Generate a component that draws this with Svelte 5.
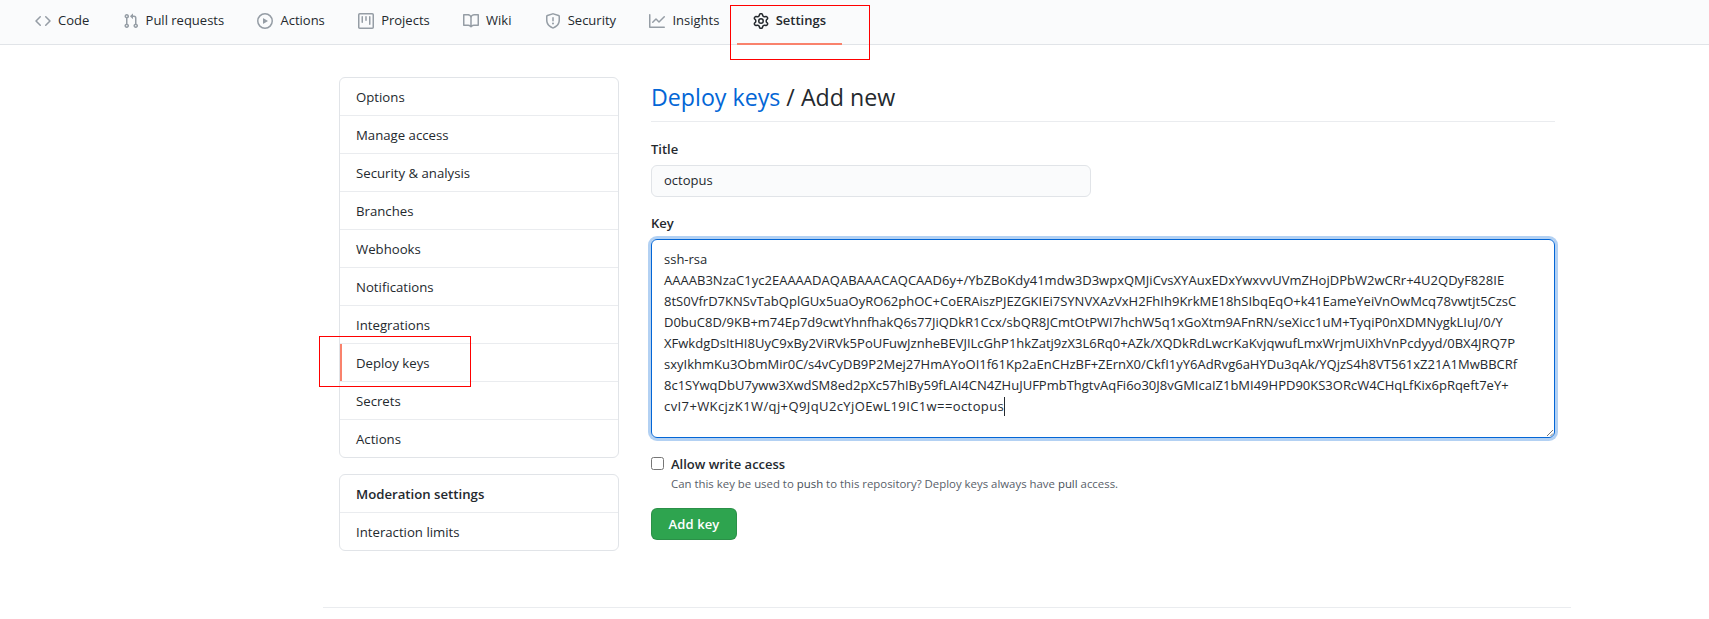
<script>
  const tabs = [
    { name: 'Code', vb: 16, d: 'M4.72 3.22a.75.75 0 011.06 1.06L2.06 8l3.72 3.72a.75.75 0 11-1.06 1.06L.47 8.53a.75.75 0 010-1.06l4.25-4.25zm6.56 0a.75.75 0 10-1.06 1.06L13.94 8l-3.72 3.72a.75.75 0 101.06 1.06l4.25-4.25a.75.75 0 000-1.06l-4.25-4.25z' },
    { name: 'Pull requests', d: 'M7.177 3.073L9.573.677A.25.25 0 0110 .854v4.792a.25.25 0 01-.427.177L7.177 3.427a.25.25 0 010-.354zM3.75 2.5a.75.75 0 100 1.5.75.75 0 000-1.5zm-2.25.75a2.25 2.25 0 113 2.122v5.256a2.251 2.251 0 11-1.5 0V5.372A2.25 2.25 0 011.5 3.25zM11 2.5h-1V4h1a1 1 0 011 1v5.628a2.251 2.251 0 101.5 0V5A2.5 2.5 0 0011 2.5zm1 10.25a.75.75 0 111.5 0 .75.75 0 01-1.5 0zM3.75 12a.75.75 0 100 1.5.75.75 0 000-1.5z' },
    { name: 'Actions', d: 'M1.5 8a6.5 6.5 0 1113 0 6.5 6.5 0 01-13 0zM8 0a8 8 0 100 16A8 8 0 008 0zM6.379 5.227A.25.25 0 006 5.442v5.117a.25.25 0 00.379.214l4.264-2.559a.25.25 0 000-.428L6.379 5.227z' },
    { name: 'Projects', d: 'M1.75 0A1.75 1.75 0 000 1.75v12.5C0 15.216.784 16 1.75 16h12.5A1.75 1.75 0 0016 14.25V1.75A1.75 1.75 0 0014.25 0H1.75zM1.5 1.75a.25.25 0 01.25-.25h12.5a.25.25 0 01.25.25v12.5a.25.25 0 01-.25.25H1.75a.25.25 0 01-.25-.25V1.75zM11.75 3a.75.75 0 00-.75.75v7.5a.75.75 0 001.5 0v-7.5a.75.75 0 00-.75-.75zm-8.25.75a.75.75 0 011.5 0v5.5a.75.75 0 01-1.5 0v-5.5zM8 3a.75.75 0 00-.75.75v3.5a.75.75 0 001.5 0v-3.5A.75.75 0 008 3z' },
    { name: 'Wiki', d: 'M0 1.75A.75.75 0 01.75 1h4.253c1.227 0 2.317.59 3 1.501A3.744 3.744 0 0111.006 1h4.245a.75.75 0 01.75.75v10.5a.75.75 0 01-.75.75h-4.507a2.25 2.25 0 00-1.591.659l-.622.621a.75.75 0 01-1.06 0l-.622-.621A2.25 2.25 0 005.258 13H.75a.75.75 0 01-.75-.75V1.75zm8.755 3a2.25 2.25 0 012.25-2.25H14.5v9h-3.757c-.71 0-1.4.201-1.992.572l.004-7.322zm-1.504 7.324l.004-5.073-.002-2.253A2.25 2.25 0 005.003 2.5H1.5v9h3.757a3.75 3.75 0 011.994.574z' },
    { name: 'Security', d: 'M7.467.133a1.75 1.75 0 011.066 0l5.25 1.68A1.75 1.75 0 0115 3.48V7c0 1.566-.32 3.182-1.303 4.682-.983 1.498-2.585 2.813-5.032 3.855a1.7 1.7 0 01-1.33 0c-2.447-1.042-4.049-2.357-5.032-3.855C1.32 10.182 1 8.566 1 7V3.48a1.75 1.75 0 011.217-1.667l5.25-1.68zm.61 1.429a.25.25 0 00-.153 0l-5.25 1.68a.25.25 0 00-.174.238V7c0 1.358.275 2.666 1.057 3.86.784 1.194 2.121 2.34 4.366 3.297a.2.2 0 00.154 0c2.245-.956 3.582-2.104 4.366-3.298C13.225 9.666 13.5 8.36 13.5 7V3.48a.25.25 0 00-.174-.237l-5.25-1.68zM9 10.5a1 1 0 11-2 0 1 1 0 012 0zm-.25-5.75a.75.75 0 10-1.5 0v3a.75.75 0 001.5 0v-3z' },
    { name: 'Insights', d: 'M1.5 1.75a.75.75 0 00-1.5 0v12.5c0 .414.336.75.75.75h14.5a.75.75 0 000-1.5H1.5V1.75zm14.28 2.53a.75.75 0 00-1.06-1.06L10 7.94 7.53 5.47a.75.75 0 00-1.06 0L3.22 8.72a.75.75 0 001.06 1.06L7 7.06l2.47 2.47a.75.75 0 001.06 0l5.25-5.25z' },
    { name: 'Settings', selected: true, d: 'M7.429 1.525a6.593 6.593 0 011.142 0c.036.003.108.036.137.146l.289 1.105c.147.56.55.967.997 1.189.174.086.341.183.501.29.417.278.97.423 1.53.27l1.102-.303c.11-.03.175.016.195.046.219.31.41.641.573.989.014.031.022.11-.059.19l-.815.806c-.411.406-.562.957-.53 1.456a4.588 4.588 0 010 .582c-.032.499.119 1.05.53 1.456l.815.806c.08.08.073.159.059.19a6.494 6.494 0 01-.573.99c-.02.029-.086.074-.195.045l-1.103-.303c-.559-.153-1.112-.008-1.529.27-.16.107-.327.204-.5.29-.449.222-.851.628-.998 1.189l-.289 1.105c-.029.11-.101.143-.137.146a6.613 6.613 0 01-1.142 0c-.036-.003-.108-.037-.137-.146l-.289-1.105c-.147-.56-.55-.967-.997-1.189a4.502 4.502 0 01-.501-.29c-.417-.278-.97-.423-1.53-.27l-1.102.303c-.11.03-.175-.016-.195-.046a6.492 6.492 0 01-.573-.989c-.014-.031-.022-.11.059-.19l.815-.806c.411-.406.562-.957.53-1.456a4.587 4.587 0 010-.582c.032-.499-.119-1.05-.53-1.456l-.815-.806c-.08-.08-.073-.159-.059-.19a6.44 6.44 0 01.573-.99c.02-.029.086-.075.195-.045l1.103.303c.559.153 1.112.008 1.529-.27.16-.107.327-.204.5-.29.449-.222.851-.628.998-1.189l.289-1.105c.029-.11.101-.143.137-.146zM8 0c-.236 0-.47.01-.701.03-.743.065-1.29.615-1.458 1.261l-.29 1.106c-.017.066-.078.158-.211.224a5.994 5.994 0 00-.668.386c-.123.082-.233.09-.3.071L3.27 2.776c-.644-.177-1.392.02-1.82.63a7.977 7.977 0 00-.704 1.217c-.315.675-.111 1.422.363 1.891l.815.806c.05.048.098.147.088.294a6.084 6.084 0 000 .772c.01.147-.038.246-.088.294l-.815.806c-.474.469-.678 1.216-.363 1.891.2.428.436.835.704 1.218.428.609 1.176.806 1.82.63l1.103-.303c.066-.019.176-.011.299.071.213.143.436.272.668.386.133.066.194.158.212.224l.289 1.106c.169.646.715 1.196 1.458 1.26a8.094 8.094 0 001.402 0c.743-.064 1.29-.614 1.458-1.26l.29-1.106c.017-.066.078-.158.211-.224a5.98 5.98 0 00.668-.386c.123-.082.233-.09.3-.071l1.102.302c.644.177 1.392-.02 1.82-.63.268-.382.505-.789.704-1.217.315-.675.111-1.422-.364-1.891l-.814-.806c-.05-.048-.098-.147-.088-.294a6.1 6.1 0 000-.772c-.01-.147.039-.246.088-.294l.814-.806c.475-.469.679-1.216.364-1.891a7.992 7.992 0 00-.704-1.218c-.428-.609-1.176-.806-1.82-.63l-1.103.303c-.066.019-.176.011-.299-.071a5.991 5.991 0 00-.668-.386c-.133-.066-.194-.158-.212-.224L10.16 1.29C9.99.645 9.444.095 8.701.031A8.094 8.094 0 008 0zm1.5 8a1.5 1.5 0 11-3 0 1.5 1.5 0 013 0zM11 8a3 3 0 11-6 0 3 3 0 016 0z' }
  ];

  const menu = ['Options', 'Manage access', 'Security & analysis', 'Branches', 'Webhooks', 'Notifications', 'Integrations', 'Deploy keys', 'Secrets', 'Actions'];

  const keyLines = [
    { text: 'ssh-rsa', spacing: 0 },
    { text: 'AAAAB3NzaC1yc2EAAAADAQABAAACAQCAAD6y+/YbZBoKdy41mdw3D3wpxQMJiCvsXYAuxEDxYwxvvUVmZHojDPbW2wCRr+4U2QDyF828IE', spacing: 0.02 },
    { text: '8tS0VfrD7KNSvTabQplGUx5uaOyRO62phOC+CoERAiszPJEZGKIEi7SYNVXAzVxH2FhIh9KrkME18hSIbqEqO+k41EameYeiVnOwMcq78vwtjt5CzsC', spacing: 0.01 },
    { text: 'D0buC8D/9KB+m74Ep7d9cwtYhnfhakQ6s77JiQDkR1Ccx/sbQR8JCmtOtPWI7hchW5q1xGoXtm9AFnRN/seXicc1uM+TyqiP0nXDMNygkLIuJ/0/Y', spacing: 0 },
    { text: 'XFwkdgDsItHI8UyC9xBy2ViRVk5PoUFuwJznheBEVJILcGhP1hkZatj9zX3L6Rq0+AZk/XQDkRdLwcrKaKvjqwufLmxWrjmUiXhVnPcdyyd/0BX4JRQ7P', spacing: 0.02 },
    { text: 'sxyIkhmKu3ObmMir0C/s4vCyDB9P2Mej27HmAYoOI1f61Kp2aEnCHzBF+ZErnX0/CkfI1yY6AdRvg6aHYDu3qAk/YQjzS4h8VT561xZ21A1MwBBCRf', spacing: 0 },
    { text: '8c1SYwqDbU7yww3XwdSM8ed2pXc57hIBy59fLAI4CN4ZHuJUFPmbThgtvAqFi6o30J8vGMIcaIZ1bMI49HPD90KS3ORcW4CHqLfKix6pRqeft7eY+', spacing: 0 }
  ];
</script>

<div class="page">
  <nav class="tabnav">
    {#each tabs as tab}
      <a class="tab" class:selected={tab.selected} href="#top">
        <svg viewBox="0 0 16 16" width="16" height="16"><path fill-rule="evenodd" d={tab.d}></path></svg>
        <span>{tab.name}</span>
      </a>
    {/each}
  </nav>

  <div class="container">
    <aside class="sidebar">
      <div class="menu">
        {#each menu as item}
          <a class="menu-item" class:current={item === 'Deploy keys'} href="#top">{item}</a>
        {/each}
      </div>
      <div class="menu">
        <div class="menu-item heading">Moderation settings</div>
        <a class="menu-item" href="#top">Interaction limits</a>
      </div>
    </aside>

    <main>
      <h2 class="subhead"><a href="#top">Deploy keys</a> / Add new</h2>

      <label class="field-label" for="title">Title</label>
      <input id="title" class="title-input" value="octopus" />

      <div class="field-label key-label">Key</div>
      <div class="key-box">
        {#each keyLines as line}
          <div style="letter-spacing: {line.spacing}px">{line.text}</div>
        {/each}
        <div class="last-line">cvI7+WKcjzK1W/qj+Q9JqU2cYjOEwL19IC1w==octopus<span class="caret"></span></div>
        <svg class="grip" viewBox="0 0 10 10" width="10" height="10">
          <path d="M9 3L3 9M9 6.5L6.5 9" stroke="#777" stroke-width="1" fill="none"></path>
        </svg>
      </div>

      <div class="check-row">
        <input id="write" type="checkbox" />
        <div>
          <label for="write">Allow write access</label>
          <p>Can this key be used to <strong>push</strong> to this repository? Deploy keys always have <strong>pull</strong> access.</p>
        </div>
      </div>

      <button class="add-btn">Add key</button>
    </main>
  </div>

  <div class="footer-rule"></div>

  <!-- screenshot annotations -->
  <div class="mark mark-tab"></div>
  <div class="mark mark-item"></div>
</div>

<style>
  :global(body) {
    margin: 0;
    background: #fff;
  }

  .page {
    position: relative;
    height: 619px;
    overflow: hidden;
    font-family: "Open Sans", "Noto Sans", sans-serif;
    font-size: 13px;
    line-height: 21px;
    color: #24292e;
  }

  a {
    color: inherit;
    text-decoration: none;
  }

  .tabnav {
    display: flex;
    height: 44px;
    padding-left: 19px;
    background: #fafbfc;
    border-bottom: 1px solid #e1e4e8;
  }

  .tab {
    display: flex;
    align-items: center;
    gap: 7px;
    box-sizing: border-box;
    height: 45px;
    padding: 0 16px 2px;
    margin-right: 1.3px;
    border-bottom: 2px solid transparent;
  }

  .tab svg {
    fill: #959da5;
    flex: none;
  }

  .tab.selected {
    font-weight: 600;
    border-bottom-color: #f9826c;
  }

  .tab.selected svg {
    fill: #24292e;
  }

  .container {
    display: flex;
    gap: 32px;
    margin: 32px 0 0 339px;
    width: 1216px;
  }

  .sidebar {
    width: 280px;
    flex: none;
    display: flex;
    flex-direction: column;
    gap: 16px;
  }

  .menu {
    border: 1px solid #e1e4e8;
    border-radius: 6px;
    overflow: hidden;
  }

  .menu-item {
    display: block;
    height: 36px;
    padding: 1px 0 0 16px;
    font-size: 13.2px;
    line-height: 37px;
    border-top: 1px solid #eaecef;
  }

  .menu-item:first-child {
    border-top: 0;
  }

  .menu-item.heading {
    font-weight: 600;
  }

  .menu-item.current {
    box-shadow: inset 2px 0 0 #f9826c;
  }

  main {
    flex: 1;
    min-width: 0;
  }

  .subhead {
    margin: 0 0 17px;
    height: 44px;
    line-height: 40px;
    font-size: 23.2px;
    font-weight: 400;
    border-bottom: 1px solid #eaecef;
  }

  .subhead a {
    color: #0366d6;
  }

  .field-label {
    display: block;
    font-weight: 600;
    margin-bottom: 5px;
  }

  .title-input {
    display: block;
    box-sizing: border-box;
    width: 440px;
    height: 32px;
    padding: 0 12px 2px;
    margin-bottom: 16px;
    font: inherit;
    color: inherit;
    background: #fafbfc;
    border: 1px solid #e1e4e8;
    border-radius: 6px;
  }

  .key-box {
    position: relative;
    box-sizing: border-box;
    height: 199px;
    padding: 9px 12px;
    white-space: nowrap;
    overflow: hidden;
    border: 1px solid #0366d6;
    border-radius: 6px;
    box-shadow: 0 0 0 3px rgba(3, 102, 214, 0.3);
  }

  .last-line {
    letter-spacing: 0.4px;
  }

  .caret {
    display: inline-block;
    width: 1px;
    height: 19px;
    vertical-align: -5px;
    background: #24292e;
  }

  .grip {
    position: absolute;
    right: 0;
    bottom: 0;
  }

  .check-row {
    display: flex;
    gap: 7px;
    margin-top: 16px;
  }

  .check-row input {
    width: 13px;
    height: 13px;
    margin: 3px 0 0;
  }

  .check-row label {
    display: block;
    font-weight: 600;
    height: 21px;
  }

  .check-row p {
    margin: 0;
    font-size: 11.4px;
    line-height: 18px;
    color: #586069;
  }

  .check-row strong {
    font-weight: 400;
    color: #444d56;
  }

  .add-btn {
    display: block;
    margin-top: 15px;
    width: 86px;
    height: 32px;
    padding: 0;
    font: inherit;
    font-weight: 600;
    letter-spacing: 0.1px;
    color: #fff;
    background: #2ea44f;
    border: 1px solid rgba(27, 31, 35, 0.15);
    border-radius: 6px;
  }

  .footer-rule {
    width: 1248px;
    margin: 56px 0 0 323px;
    border-top: 1px solid #eaecef;
  }

  .mark {
    position: absolute;
    box-sizing: border-box;
    border: 1px solid #f00;
  }

  .mark-tab {
    left: 730px;
    top: 5px;
    width: 140px;
    height: 55px;
  }

  .mark-item {
    left: 319px;
    top: 336px;
    width: 152px;
    height: 51px;
  }
</style>
